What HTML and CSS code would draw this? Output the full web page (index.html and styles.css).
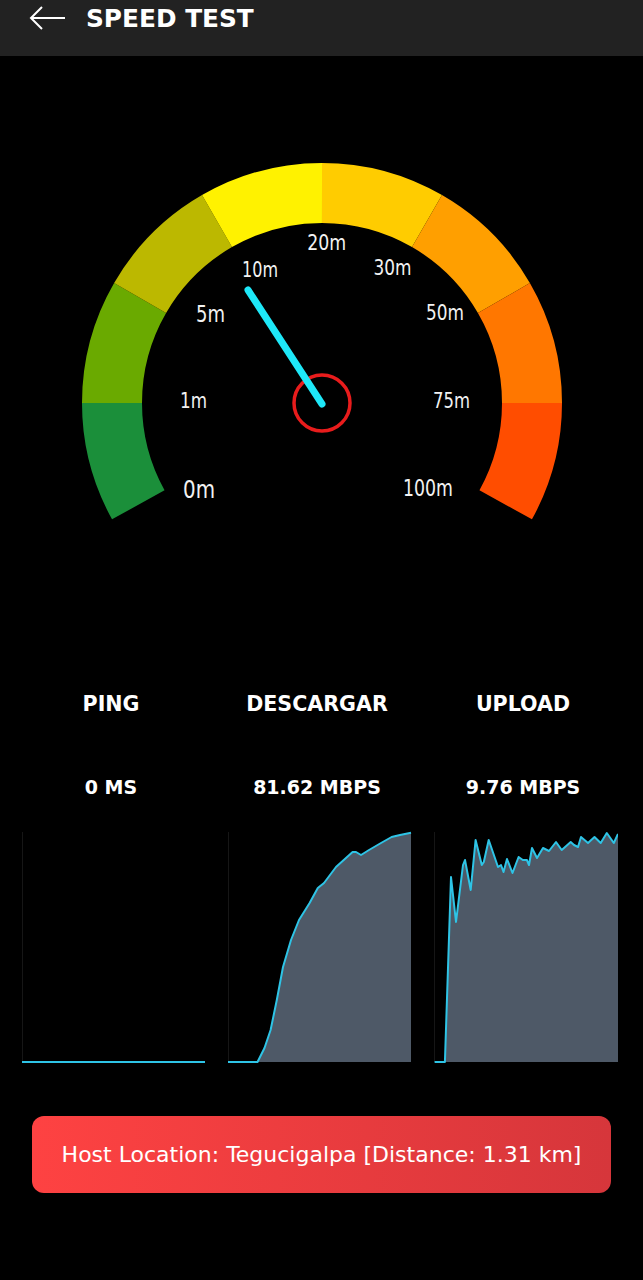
FILE: index.html
```html
<!DOCTYPE html>
<html lang="en">
<head>
  <meta charset="UTF-8">
  <meta name="viewport" content="width=device-width, initial-scale=1.0">
  <title>Speed Test</title>
  <link rel="stylesheet" href="styles.css">
</head>
<body>
  <header class="topbar">
    <svg class="back" width="40" height="30" viewBox="0 0 40 30">
      <path d="M3 16 H37 M14 5 L3 16 L14 27" />
    </svg>
    <h1>SPEED TEST</h1>
  </header>

  <section class="gauge">
    <svg width="643" height="584" viewBox="0 56 643 584">
      <!-- colour bands, 30deg each, r=210 -->
      <g class="band">
        <path d="M138.3 504.8 A210 210 0 0 1 112 403" stroke="#1b8f3a" />
        <path d="M112 403 A210 210 0 0 1 140.1 298" stroke="#6aaa00" />
        <path d="M140.1 298 A210 210 0 0 1 217 221.1" stroke="#bcb800" />
        <path d="M217 221.1 A210 210 0 0 1 322 193" stroke="#fff200" />
        <path d="M322 193 A210 210 0 0 1 427 221.1" stroke="#ffcc00" />
        <path d="M427 221.1 A210 210 0 0 1 503.9 298" stroke="#ff9f00" />
        <path d="M503.9 298 A210 210 0 0 1 532 403" stroke="#ff7700" />
        <path d="M532 403 A210 210 0 0 1 505.7 504.8" stroke="#ff4d00" />
      </g>
      <!-- labels squeezed to the narrow face of the dial -->
      <g class="ticks">
        <text x="199" y="497.5" class="tick-lg" textLength="32" lengthAdjust="spacingAndGlyphs">0m</text>
        <text x="193.5" y="408" textLength="27" lengthAdjust="spacingAndGlyphs">1m</text>
        <text x="210.5" y="321.5" class="tick-md" textLength="29" lengthAdjust="spacingAndGlyphs">5m</text>
        <text x="260" y="276.5" textLength="36" lengthAdjust="spacingAndGlyphs">10m</text>
        <text x="326.7" y="250" textLength="39" lengthAdjust="spacingAndGlyphs">20m</text>
        <text x="392.5" y="275" textLength="38" lengthAdjust="spacingAndGlyphs">30m</text>
        <text x="445" y="320" textLength="38" lengthAdjust="spacingAndGlyphs">50m</text>
        <text x="451.5" y="408" textLength="37" lengthAdjust="spacingAndGlyphs">75m</text>
        <text x="428" y="495.5" class="tick-md" textLength="50" lengthAdjust="spacingAndGlyphs">100m</text>
      </g>
      <circle class="hub" cx="322" cy="403" r="28" />
      <line class="needle" x1="322" y1="404" x2="248" y2="290" />
    </svg>
  </section>

  <section class="stats">
    <div class="stat">
      <div class="stat-label">PING</div>
      <div class="stat-value">0 MS</div>
    </div>
    <div class="stat">
      <div class="stat-label">DESCARGAR</div>
      <div class="stat-value">81.62 MBPS</div>
    </div>
    <div class="stat">
      <div class="stat-label">UPLOAD</div>
      <div class="stat-value">9.76 MBPS</div>
    </div>
  </section>

  <section class="charts">
    <svg class="chart" width="184" height="240" viewBox="22 828 184 240">
      <line class="axis" x1="22.5" y1="832" x2="22.5" y2="1062" />
      <path class="trace" d="M22 1062 H205" />
    </svg>
    <svg class="chart" width="184" height="240" viewBox="228 828 184 240">
      <line class="axis" x1="228.5" y1="832" x2="228.5" y2="1062" />
      <path class="area" d="M257.5 1062 L264.5 1048 L270.6 1030 L276.8 1000 L283 967 L291 940 L299 920 L309.6 903 L317.8 888 L324 883 L336 867 L352.6 852 L356 852 L361 855 L369 850 L381 843 L391.6 837 L400 835 L411 832.7 L411 1062 Z" />
      <path class="trace" d="M228 1062 L257.5 1062 L264.5 1048 L270.6 1030 L276.8 1000 L283 967 L291 940 L299 920 L309.6 903 L317.8 888 L324 883 L336 867 L352.6 852 L356 852 L361 855 L369 850 L381 843 L391.6 837 L400 835 L411 832.7" />
    </svg>
    <svg class="chart" width="184" height="240" viewBox="434 828 184 240">
      <line class="axis" x1="434.5" y1="832" x2="434.5" y2="1062" />
      <path class="area" d="M444.9 1062 L451 877 L456 922 L463 865 L465 860 L470.7 890 L475.6 840 L481.8 865 L483.8 862 L488.7 840 L498 867 L501 865 L503.5 872 L507 859 L512.5 873 L518.6 857 L522.8 860 L526.9 860 L529 865 L532 848 L537 858 L543 848 L549 851 L556 842 L561.7 850 L570.7 842 L574 845 L578 847 L581 837 L588 843 L594.5 837 L600.7 843 L606.8 833 L613.8 843 L618 834 L618 1062 Z" />
      <path class="trace" d="M434.6 1062 L444.9 1062 L451 877 L456 922 L463 865 L465 860 L470.7 890 L475.6 840 L481.8 865 L483.8 862 L488.7 840 L498 867 L501 865 L503.5 872 L507 859 L512.5 873 L518.6 857 L522.8 860 L526.9 860 L529 865 L532 848 L537 858 L543 848 L549 851 L556 842 L561.7 850 L570.7 842 L574 845 L578 847 L581 837 L588 843 L594.5 837 L600.7 843 L606.8 833 L613.8 843 L618 834" />
    </svg>
  </section>

  <div class="host">Host Location: Tegucigalpa [Distance: 1.31 km]</div>
</body>
</html>
```

FILE: styles.css
```css
body {
  margin: 0;
  background-color: #000;
  color: #fff;
  font-family: "DejaVu Sans", sans-serif;
}
.topbar {
  height: 56px;
  background-color: #222;
  display: flex;
  align-items: flex-start;
}
.back {
  margin: 2px 0 0 28px;
  fill: none;
  stroke: #fff;
  stroke-width: 2;
}
.topbar h1 {
  margin: 0 0 0 18px;
  font-size: 24.8px;
  line-height: 38px;
  font-weight: bold;
}
.gauge svg {
  display: block;
}
.band path {
  fill: none;
  stroke-width: 60;
}
.ticks text {
  fill: #f2f2f2;
  font-family: "DejaVu Sans", sans-serif;
  font-size: 21px;
  text-anchor: middle;
}
.ticks .tick-md {
  font-size: 23px;
}
.ticks .tick-lg {
  font-size: 25px;
}
.hub {
  fill: none;
  stroke: #e81c1c;
  stroke-width: 3.5;
}
.needle {
  stroke: #1ee8f8;
  stroke-width: 7;
  stroke-linecap: round;
}
.stats {
  display: grid;
  grid-template-columns: repeat(3, 184px);
  column-gap: 22px;
  padding: 52px 0 0 19px;
  text-align: center;
}
.stat-label {
  font-size: 20.6px;
  line-height: 24px;
  font-weight: bold;
}
.stat-value {
  margin-top: 59px;
  font-size: 19px;
  line-height: 24px;
  font-weight: bold;
}
.charts {
  display: grid;
  grid-template-columns: repeat(3, 184px);
  column-gap: 22px;
  padding: 29px 0 0 22px;
}
.chart {
  display: block;
}
.axis {
  stroke: #161616;
  stroke-width: 1;
}
.area {
  fill: #4e5967;
}
.trace {
  fill: none;
  stroke: #2ec4e6;
  stroke-width: 2;
  stroke-linejoin: round;
}
.host {
  margin: 48px 32px 0 32px;
  height: 77px;
  border-radius: 12px;
  background: linear-gradient(90deg, #fe4242, #d6363b);
  display: flex;
  align-items: center;
  justify-content: center;
  font-size: 22px;
}
```
